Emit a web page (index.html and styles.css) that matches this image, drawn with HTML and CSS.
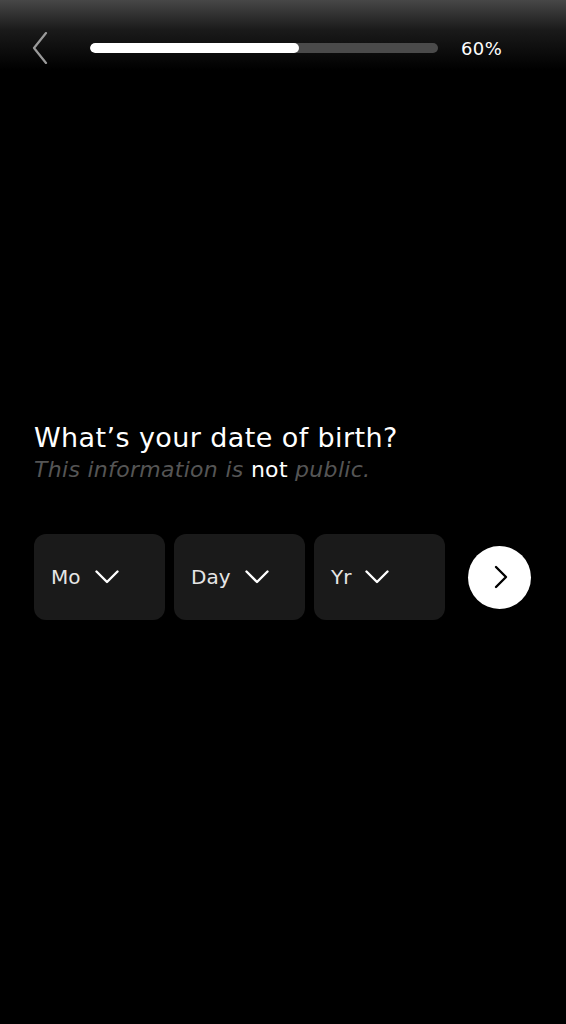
FILE: index.html
```html
<!DOCTYPE html>
<html>
<head>
<meta charset="utf-8">
<link rel="stylesheet" href="styles.css">
</head>
<body>
<div class="screen">
  <header class="topbar">
    <button class="back" aria-label="Back">
      <svg width="16" height="32" viewBox="0 0 16 32"><path d="M14 1 L2 16 L14 31" fill="none" stroke="#9a9a9a" stroke-width="2.2" stroke-linecap="round" stroke-linejoin="round"/></svg>
    </button>
    <div class="progress"><div class="progress-fill" style="width:60%"></div></div>
    <span class="percent">60%</span>
  </header>
  <main class="content">
    <h1 class="title">What’s your date of birth?</h1>
    <p class="subtitle">This information is <b>not</b> public.</p>
    <div class="row">
      <div class="select"><span>Mo</span><svg class="chev" width="24" height="14" viewBox="0 0 24 14"><path d="M1.5 1.5 L12 12 L22.5 1.5" fill="none" stroke="#fff" stroke-width="2.4" stroke-linecap="round" stroke-linejoin="round"/></svg></div>
      <div class="select"><span>Day</span><svg class="chev" width="24" height="14" viewBox="0 0 24 14"><path d="M1.5 1.5 L12 12 L22.5 1.5" fill="none" stroke="#fff" stroke-width="2.4" stroke-linecap="round" stroke-linejoin="round"/></svg></div>
      <div class="select"><span>Yr</span><svg class="chev" width="24" height="14" viewBox="0 0 24 14"><path d="M1.5 1.5 L12 12 L22.5 1.5" fill="none" stroke="#fff" stroke-width="2.4" stroke-linecap="round" stroke-linejoin="round"/></svg></div>
      <button class="next" aria-label="Next">
        <svg width="14" height="24" viewBox="0 0 14 24"><path d="M2 2 L12 12 L2 22" fill="none" stroke="#000" stroke-width="2.4" stroke-linecap="round" stroke-linejoin="round"/></svg>
      </button>
    </div>
  </main>
</div>
</body>
</html>
```
FILE: styles.css
```css
* { box-sizing: border-box; }
html, body { margin: 0; padding: 0; background: #000; }
body { font-family: "DejaVu Sans", "Open Sans", sans-serif; color: #fff; }
.screen {
  width: 566px;
  height: 1024px;
  background: linear-gradient(to bottom, #474747 0px, #1a1a1a 30px, #000 70px, #000 100%);
}
.topbar {
  display: flex;
  align-items: center;
  padding: 32px 0 0 32px;
  height: 64px;
}
.back {
  background: none;
  border: 0;
  padding: 0;
  width: 16px;
  height: 32px;
  display: flex;
  cursor: pointer;
}
.progress {
  margin-left: 42px;
  width: 348px;
  height: 10px;
  border-radius: 5px;
  background: #4a4a4a;
  overflow: hidden;
}
.progress-fill { height: 100%; background: #fff; border-radius: 5px; }
.percent {
  margin-left: 23px;
  font-size: 18px;
  font-weight: 400;
  letter-spacing: 0.4px;
}
.content { padding: 357px 0 0 34px; }
.title {
  margin: 0;
  font-size: 27px;
  font-weight: 400;
  line-height: 33px;
  letter-spacing: 0.4px;
}
.subtitle {
  margin: 2px 0 0;
  font-size: 22px;
  line-height: 28px;
  font-style: italic;
  font-weight: 300;
  color: #555;
  letter-spacing: 0.3px;
}
.subtitle b { color: #fff; font-weight: 400; font-style: normal; }
.row {
  display: flex;
  align-items: center;
  margin-top: 50px;
  gap: 9px;
}
.select {
  width: 131px;
  height: 86px;
  background: #1a1a1a;
  border-radius: 12px;
  display: flex;
  align-items: center;
  padding-left: 17px;
  gap: 14px;
  font-size: 20px;
  color: #e6e6e6;
}
.select span { line-height: 1; }
.chev { display: block; }
.next {
  margin-left: 14px;
  width: 63px;
  height: 63px;
  border-radius: 50%;
  background: #fff;
  border: 0;
  display: flex;
  align-items: center;
  justify-content: center;
  padding: 0 0 0 2px;
  cursor: pointer;
}
```
